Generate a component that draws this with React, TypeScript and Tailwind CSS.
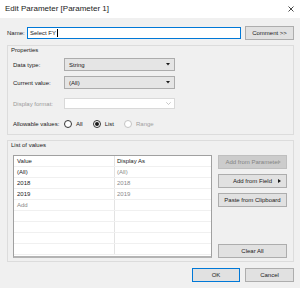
import React from "react";

function Button({
  label,
  disabled,
  focused,
  arrow,
  className = "",
}: {
  label: string;
  disabled?: boolean;
  focused?: boolean;
  arrow?: boolean;
  className?: string;
}) {
  return (
    <div
      className={`relative flex h-[14px] items-center justify-center border ${
        disabled
          ? "border-[#bfbfbf] bg-[#cccccc] text-[#838383]"
          : focused
          ? "border-[#0078d7] bg-[#e1e1e1] text-[#1a1a1a]"
          : "border-[#adadad] bg-[#e1e1e1] text-[#1a1a1a]"
      } ${className}`}
    >
      <span>{label}</span>
      {arrow && (
        <svg
          width="3"
          height="4"
          viewBox="0 0 3 4"
          className="absolute right-[5px] top-[4px]"
        >
          <path d="M0 0 L3 2 L0 4 Z" fill={disabled ? "#a8a8a8" : "#1a1a1a"} />
        </svg>
      )}
    </div>
  );
}

function Select({ value }: { value: string }) {
  return (
    <div className="flex h-[13px] w-[111px] items-center justify-between border border-[#acacac] bg-[#e5e5e5] pl-[4px] pr-[4px]">
      <span>{value}</span>
      <svg width="4" height="2.5" viewBox="0 0 4 2.5">
        <path d="M0 0 H4 L2 2.5 Z" fill="#1a1a1a" />
      </svg>
    </div>
  );
}

function Radio({
  label,
  checked,
  disabled,
}: {
  label: string;
  checked?: boolean;
  disabled?: boolean;
}) {
  return (
    <div className={`flex items-center gap-[4px] ${disabled ? "text-[#a0a0a0]" : ""}`}>
      <span
        className={`flex h-[8px] w-[8px] items-center justify-center rounded-full border bg-white ${
          disabled ? "border-[#c4c4c4]" : "border-[#333333]"
        }`}
      >
        {checked && <span className="h-[4px] w-[4px] rounded-full bg-[#1a1a1a]" />}
      </span>
      <span>{label}</span>
    </div>
  );
}

const ROWS: { value: string; display: string; add?: boolean }[] = [
  { value: "(All)", display: "(All)" },
  { value: "2018", display: "2018" },
  { value: "2019", display: "2019" },
  { value: "Add", display: "", add: true },
  { value: "", display: "" },
  { value: "", display: "" },
  { value: "", display: "" },
  { value: "", display: "" },
];

export default function App() {
  return (
    <div
      className="flex h-[288px] w-[300px] flex-col overflow-hidden bg-[#f0f0f0] text-[6px] leading-[6px] text-[#1a1a1a]"
      style={{ fontFamily: '"Liberation Sans", Arial, sans-serif' }}
    >
      {/* Title bar */}
      <div className="flex h-[18px] shrink-0 items-center justify-between bg-white pl-[5px] pr-[6px]">
        <span className="text-[8px] leading-[8px] text-[#1a1a1a]">
          Edit Parameter [Parameter 1]
        </span>
        <svg width="6" height="6" viewBox="0 0 6 6">
          <path d="M0.5 0.5 L5.5 5.5 M5.5 0.5 L0.5 5.5" stroke="#333" strokeWidth="0.9" />
        </svg>
      </div>

      {/* Name row */}
      <div className="mt-[8px] flex h-[14px] items-center pl-[7px] pr-[6px]">
        <span className="w-[20px]">Name:</span>
        <div className="flex h-[12px] w-[214px] items-center border border-[#0078d7] bg-white pl-[2px]">
          <span>Select FY</span>
          <span className="ml-[0.5px] h-[8px] w-[0.5px] bg-black" />
        </div>
        <Button label="Comment >>" className="ml-auto w-[49px]" />
      </div>

      {/* Properties */}
      <div className="ml-[7px] mt-[5px] flex h-[90px] w-[287px] flex-col border border-[#dcdcdc] pl-[5px]">
        <div className="-ml-[2px] mt-[1px] h-[6px]">Properties</div>
        <div className="mt-[5px] flex items-center">
          <span className="w-[51px]">Data type:</span>
          <Select value="String" />
        </div>
        <div className="mt-[5px] flex items-center">
          <span className="w-[51px]">Current value:</span>
          <Select value="(All)" />
        </div>
        <div className="mt-[9px] flex items-center">
          <span className="w-[51px] text-[#9a9a9a]">Display format:</span>
          <div className="flex h-[11px] w-[111px] items-center justify-end border border-[#d9d9d9] bg-white pr-[3px]">
            <svg width="5" height="3" viewBox="0 0 5 3">
              <path d="M0.3 0.3 L2.5 2.5 L4.7 0.3" stroke="#b0b0b0" strokeWidth="0.7" fill="none" />
            </svg>
          </div>
        </div>
        <div className="mt-[10px] flex h-[10px] items-center">
          <span className="w-[51px]">Allowable values:</span>
          <div className="flex items-center gap-[10px]">
            <Radio label="All" />
            <Radio label="List" checked />
            <Radio label="Range" disabled />
          </div>
        </div>
      </div>

      {/* List of values */}
      <div className="ml-[7px] mt-[5px] flex h-[122px] w-[287px] flex-col border border-[#dcdcdc] pl-[5px] pr-[5px]">
        <div className="-ml-[2px] mt-[1px] h-[6px]">List of values</div>
        <div className="mt-[7px] flex">
          {/* table */}
          <div className="h-[103px] w-[199px] overflow-hidden border border-[#a0a0a0] border-b-2 border-b-[#b4b4b4] bg-white">
            <div className="flex h-[11px] items-center border-b border-[#f0f0f0]">
              <span className="w-[100px] pl-[3px]">Value</span>
              <span className="h-full border-l border-[#e3e3e3] pl-[2px] leading-[11px]">Display As</span>
            </div>
            {ROWS.map((r, i) => (
              <div key={i} className="flex h-[11px] items-center border-b border-[#f0f0f0]">
                <span className={`w-[100px] pl-[3px] ${r.add ? "text-[#8a8a8a]" : ""}`}>
                  {r.value}
                </span>
                <span className="h-full flex-1 border-l border-[#e3e3e3] pl-[2px] leading-[11px] text-[#8a8a8a]">
                  {r.display}
                </span>
              </div>
            ))}
          </div>
          {/* buttons */}
          <div className="ml-[6px] flex h-[103px] w-[69px] flex-col gap-[5px]">
            <Button label="Add from Parameter" disabled arrow />
            <Button label="Add from Field" arrow />
            <Button label="Paste from Clipboard" />
            <Button label="Clear All" className="mt-auto" />
          </div>
        </div>
      </div>

      {/* Footer */}
      <div className="mt-[6px] flex justify-end gap-[5px] pr-[6px]">
        <Button label="OK" focused className="w-[48px]" />
        <Button label="Cancel" className="w-[49px]" />
      </div>
    </div>
  );
}
